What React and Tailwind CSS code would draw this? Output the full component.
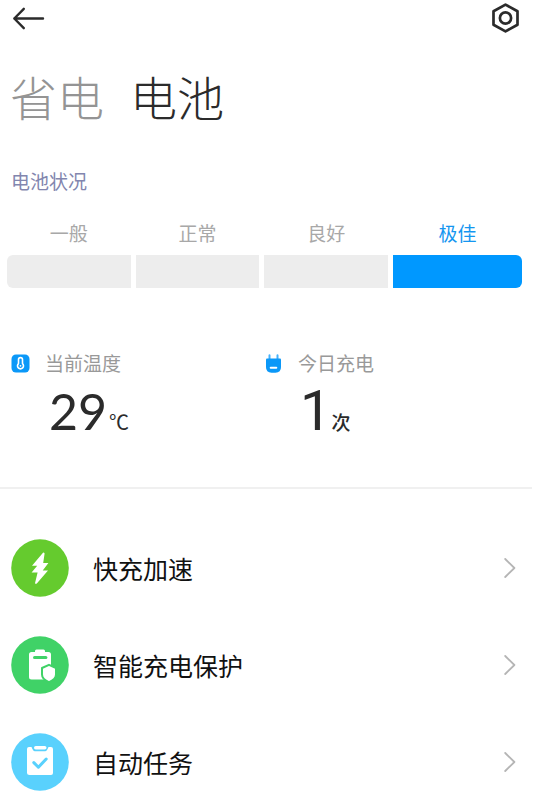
const CJK = "font-['Noto_Sans_CJK_SC',sans-serif]";

const levels = [
  { name: '一般', active: false },
  { name: '正常', active: false },
  { name: '良好', active: false },
  { name: '极佳', active: true },
];

function ArrowLeftIcon() {
  return (
    <svg width="33" height="24" viewBox="0 0 33 24" fill="none" stroke="#2b2b2b" strokeWidth="2.4" strokeLinecap="round" strokeLinejoin="round" aria-hidden="true">
      <path d="M31 12.500H2.300M11.800 2.800 2.300 12.500l9.500 9.700" />
    </svg>
  );
}

function SettingsIcon() {
  return (
    <svg width="30" height="32" viewBox="0 0 30 32" fill="none" stroke="#2b2b2b" strokeWidth="2.700" strokeLinejoin="round" aria-hidden="true">
      <path d="M15.500 2.600 27.500 9.300v13.400l-12 6.700-12-6.700V9.300z" />
      <circle cx="15.500" cy="16" r="5.600" />
    </svg>
  );
}

function ThermometerIcon() {
  return (
    <svg width="19" height="19" viewBox="0 0 19 19" aria-hidden="true">
      <rect x="0.5" y="0.5" width="18" height="18" rx="4.5" fill="#0b98f8" />
      <path d="M7.500 9.600V5.600a2 2 0 0 1 4 0v4a3 3 0 1 1-4 0z" fill="none" stroke="#fff" strokeWidth="1.600" strokeLinejoin="round" />
      <circle cx="9.500" cy="11.800" r="0.900" fill="#fff" />
    </svg>
  );
}

function PlugIcon() {
  return (
    <svg width="19" height="19" viewBox="0 0 19 19" aria-hidden="true">
      <path d="M5.500 1.200v4M13.500 1.200v4" stroke="#45b1fb" strokeWidth="2" strokeLinecap="round" />
      <path d="M3 4.500h13q1 0 1 1V13q0 5.700-5.500 5.700h-4Q2 18.700 2 13V5.500q0-1 1-1z" fill="#0b98f8" />
      <path d="M6.700 13.800h5.600" stroke="#fff" strokeWidth="2" strokeLinecap="round" />
    </svg>
  );
}

function BoltIcon() {
  return (
    <svg width="58" height="58" viewBox="0 0 58 58" aria-hidden="true">
      <circle cx="29" cy="29" r="28.800" fill="#65cb2e" />
      <path d="M32 13.800 21 26.800h5.200L20.600 33.600h6L24 44.200q.6 1.200 1.800.2L37 31.600h-5.300L37.400 24h-5.200l1.400-9.600q-.7-1.300-1.600-.6z" fill="#fff" />
    </svg>
  );
}

function BatteryShieldIcon() {
  return (
    <svg width="58" height="58" viewBox="0 0 58 58" aria-hidden="true">
      <circle cx="29" cy="29" r="28.800" fill="#40d267" />
      <path d="M25.500 13.500h7q1.500 0 1.500 1.500v1h3.500q2.500 0 2.500 2.500V41q0 2.500-2.500 2.500h-17Q18 43.500 18 41V18.500q0-2.500 2.500-2.500H24v-1q0-1.500 1.500-1.500z" fill="#fff" />
      <path d="M23.500 21.500h11.400" stroke="#40d267" strokeWidth="3" strokeLinecap="round" />
      <path d="m38 28.800 7 3.200v6.500c0 4-3 6-7 7.600-4-1.600-7-3.600-7-7.600V32z" fill="#fff" stroke="#40d267" strokeWidth="2" strokeLinejoin="round" />
    </svg>
  );
}

function ClipboardIcon() {
  return (
    <svg width="58" height="58" viewBox="0 0 58 58" aria-hidden="true">
      <circle cx="29" cy="29" r="28.800" fill="#59d1fd" />
      <path d="M18 14h2.500c1.500 4 2.500 4.300 4.500 4.300h8c2 0 3-.3 4.500-4.300H40q2 0 2 2v24q0 2-2 2H18.500q-2.500 0-2.500-2V16q0-2 2-2z" fill="#fff" />
      <rect x="23" y="13" width="12.500" height="3.600" rx="1.800" fill="#fff" />
      <path d="m22.800 29.600 4.600 4.600 7.800-8.200" fill="none" stroke="#59d1fd" strokeWidth="3" strokeLinecap="round" strokeLinejoin="round" />
    </svg>
  );
}

function ChevronIcon() {
  return (
    <svg width="12" height="20" viewBox="0 0 12 20" fill="none" stroke="#b5b5b5" strokeWidth="1.800" strokeLinecap="round" strokeLinejoin="round" aria-hidden="true">
      <path d="m1.200 1 9.200 9-9.200 9" />
    </svg>
  );
}

function Stat({ icon, label, children }) {
  return (
    <div>
      <dt className="flex h-6 items-center gap-[15px] text-[19px] leading-6 text-[#999999]">
        {icon}
        {label}
      </dt>
      <dd className="mt-1 flex h-16 items-baseline pl-9 text-[#2b2b2b]">{children}</dd>
    </div>
  );
}

const items = [
  { label: '快充加速', icon: <BoltIcon /> },
  { label: '智能充电保护', icon: <BatteryShieldIcon /> },
  { label: '自动任务', icon: <ClipboardIcon /> },
];

export default function App() {
  return (
    <main lang="zh-CN" className={`min-h-screen bg-white ${CJK}`}>
      <header className="flex h-9 items-center justify-between pr-5 pl-3">
        <button type="button" aria-label="返回"><ArrowLeftIcon /></button>
        <button type="button" aria-label="设置"><SettingsIcon /></button>
      </header>

      <nav className="mt-8 flex gap-[26px] pl-[10px] text-[47px] leading-[56px] font-light">
        <button type="button" className="text-[#949494]">省电</button>
        <button type="button" className="text-[#2b2b2b]" aria-current="page">电池</button>
      </nav>

      <section className="mt-[45px]">
        <h2 className="pl-[11px] text-[19px] leading-6 text-[#8286ae]">电池状况</h2>
        <ul className="mt-7 grid grid-cols-[24fr_24fr_24fr_25fr] gap-[5px] pr-[18px] pl-[7px] text-center text-[19px] leading-6">
          {levels.map((l) => (
            <li key={l.name} className="group">
              <span className={l.active ? 'text-[#1496f0]' : 'text-[#a8a8a8]'}>{l.name}</span>
              <div className={`mt-[10px] h-[33px] group-first:rounded-l-md group-last:rounded-r-md ${l.active ? 'bg-[#0098ff]' : 'bg-[#ededed]'}`} />
            </li>
          ))}
        </ul>
      </section>

      <dl className="mt-[63px] grid grid-cols-2 pr-[23px] pl-[11px]">
        <Stat icon={<ThermometerIcon />} label="当前温度">
          <span className="pl-0.5 font-[Lato,sans-serif] text-[50px] leading-[64px]">29</span>
          <span className="pl-0.5 text-[20px]">℃</span>
        </Stat>
        <Stat icon={<PlugIcon />} label="今日充电">
          <span className="font-[Roboto,sans-serif] text-[56px] leading-[64px]">1</span>
          <span className="text-[19px] font-medium">次</span>
        </Stat>
      </dl>

      <hr className="mt-11 mr-2 border-t-2 border-[#f0f0f0]" />

      <ul className="mt-[30px]">
        {items.map((it) => (
          <li key={it.label}>
            <button type="button" className="flex h-[97px] w-full items-center pr-6 pl-[11px] text-left">
              {it.icon}
              <span className="grow pl-6 text-[25px] leading-8 text-[#111111]">{it.label}</span>
              <ChevronIcon />
            </button>
          </li>
        ))}
      </ul>
    </main>
  );
}
